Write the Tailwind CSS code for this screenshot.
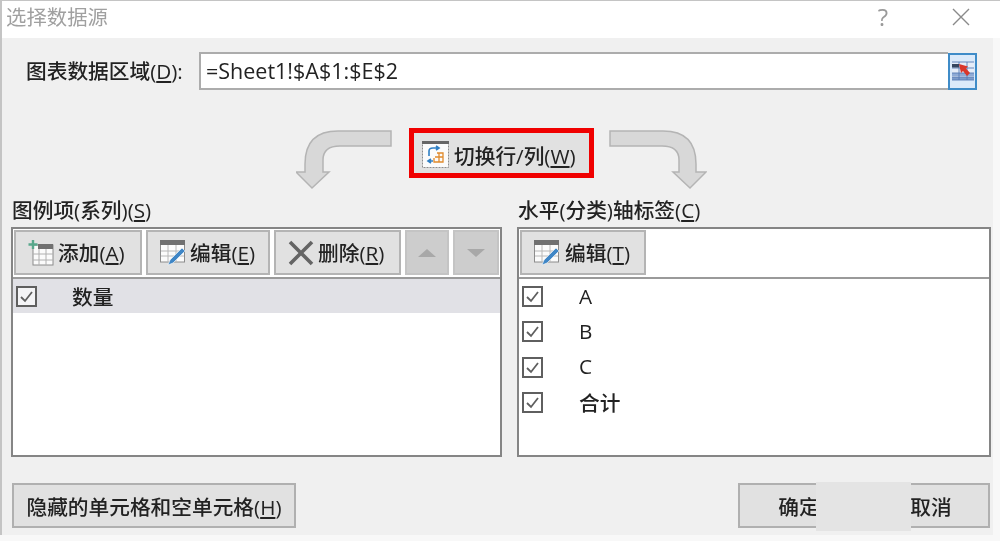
<!DOCTYPE html>
<html lang="zh-CN">
<head>
<meta charset="utf-8">
<script src="https://cdn.jsdelivr.net/npm/@tailwindcss/browser@4"></script>
<title>选择数据源</title>
</head>
<body class="overflow-hidden">
<div class="relative w-[1000px] h-[541px] overflow-hidden bg-[#f8f8f8] text-[20.700px] leading-[26px] font-medium text-[#222222] font-['Open_Sans','Noto_Sans_CJK_SC',sans-serif] blur-[0.4px]">
  <!-- title bar -->
  <div class="flex items-center h-[38px] bg-white border-t border-[#c4c4c4] border-l-2 pl-1 pr-[30px] pb-[6px]">
    <span class="text-[20.400px] font-normal text-[#a0a0a0]">选择数据源</span>
    <span class="ml-auto mr-[64px] text-[24px] font-normal text-[#9a9a9a]">?</span>
    <svg class="w-[18px] h-[18px]" viewBox="0 0 18 18"><path d="M1 1 L17 17 M17 1 L1 17" stroke="#8a8a8a" stroke-width="1.4" fill="none"/></svg>
  </div>
  <!-- dialog body -->
  <div class="w-[993px] h-[497px] bg-[#f0f0f0] border-l-2 border-[#c4c4c4] pl-[9px] pr-[1px] pt-[14px]">
    <!-- range row -->
    <div class="flex items-center h-[38px] pl-[15px] mr-[15px]">
      <span class="w-[173px] whitespace-nowrap">图表数据区域(<span class="underline">D</span>):</span>
      <div class="flex-1 h-[38px] flex items-center bg-white border-2 border-[#acacac] border-r-0 pl-[5px] text-[21.500px] font-normal">=Sheet1!$A$1:$E$2</div>
      <div class="flex items-center justify-center w-[29px] h-[37px] bg-[#dbeafa] border-2 border-[#3f8cc8]">
        <svg class="w-[22px] h-[20px] shrink-0" viewBox="0 0 22 20">
          <rect x="0" y="1" width="22" height="18" fill="#e6edf8"/>
          <rect x="0" y="12" width="22" height="3" fill="#8fabd6"/>
          <rect x="0" y="16" width="22" height="3" fill="#7d9ccb"/>
          <path d="M0 1 H22 M0 7 H22 M0 12 H22 M0 16 H22 M0 19 H22 M7 1 V19 M15 1 V19" stroke="#5a7db5" stroke-width="0.900" fill="none"/>
          <rect x="0" y="3" width="7" height="3.500" fill="#36465f"/>
          <path d="M7 3 L16 5.500 L14 7.500 L18 12 L15 15 L11 10 L9 12 Z" fill="#d9362b"/>
        </svg>
      </div>
    </div>
    <!-- switch row -->
    <div class="flex items-start h-[60px] mt-[38px] pl-[285px]">
      <svg class="w-[97px] h-[60px] mt-[2px] shrink-0" viewBox="0 0 97 60"><path d="M95 1 H42 Q9 1 9 34 V42 H0 L16 58 L33 42 H27 V30 Q27 16 44 16 H95 Z" fill="#d8d8d8" stroke="#b4b4b4" stroke-width="1.500"/></svg>
      <div class="flex items-center w-[185px] h-[50px] ml-[16px] bg-[#e1e1e1] border-[5px] border-[#f00000] pl-[8px] shrink-0">
        <svg class="w-[27px] h-[27px] mt-[2px] shrink-0" viewBox="0 0 27 27">
          <rect x="0.500" y="0.500" width="26" height="26" fill="#fbfbfb" stroke="#8c8c8c" stroke-dasharray="2 1"/>
          <rect x="0" y="0" width="27" height="3" fill="#666666"/>
          <path d="M15 12 H21 V21 H12 V17 M21 16 H13 M17 12 V21" stroke="#e08a2c" stroke-width="1.300" fill="none"/>
          <path d="M7 15 V10 Q7 7 11 7 H16 M14 5 L17 7 L14 9" stroke="#2f7fc4" stroke-width="1.600" fill="none"/>
          <path d="M11 20 H7 M9 18 L6 20 L9 22" stroke="#2f7fc4" stroke-width="1.600" fill="none"/>
        </svg>
        <span class="ml-[5px] pt-[6px] whitespace-nowrap">切换行/列(<span class="underline">W</span>)</span>
      </div>
      <svg class="w-[98px] h-[60px] mt-[2px] ml-[15px] shrink-0" viewBox="0 0 98 60"><path d="M1 1 H54 Q87 1 87 34 V42 H97 L81 58 L64 42 H70 V30 Q70 16 53 16 H1 Z" fill="#d8d8d8" stroke="#b4b4b4" stroke-width="1.500"/></svg>
    </div>
    <!-- panels -->
    <div class="flex gap-[15px] mt-[10px]">
      <!-- left -->
      <div class="w-[491px]">
        <div class="h-[26px] leading-[24px] mb-[3px] pl-px whitespace-nowrap">图例项(系列)(<span class="underline">S</span>)</div>
        <div class="h-[230px] bg-white border-2 border-[#858585]">
          <div class="flex gap-[4px] h-[50px] pl-px pt-px border-b-2 border-[#9a9a9a]">
            <div class="flex items-center w-[128px] h-[45px] bg-[#e1e1e1] border-2 border-[#b4b4b4] pl-[12px]">
              <svg class="w-[26px] h-[26px] shrink-0" viewBox="0 0 26 26">
                <rect x="5" y="5" width="20" height="20" fill="#fbfbfb" stroke="#8c8c8c"/>
                <rect x="10" y="4" width="15" height="5" fill="#707070"/>
                <path d="M5 14 H25 M5 20 H25 M11 9 V25 M18 9 V25" stroke="#b0b0b0" fill="none"/>
                <path d="M5 0 V9 M0.500 4.500 H9.500" stroke="#58a88c" stroke-width="2.400" fill="none"/>
              </svg>
              <span class="ml-[4px] whitespace-nowrap">添加(<span class="underline">A</span>)</span>
            </div>
            <div class="flex items-center w-[124px] h-[45px] bg-[#e1e1e1] border-2 border-[#b4b4b4] pl-[12px]">
              <svg class="w-[26px] h-[26px] shrink-0" viewBox="0 0 26 26">
                <rect x="0.500" y="1" width="24" height="21" fill="#fbfbfb" stroke="#8c8c8c"/>
                <rect x="0" y="0" width="25" height="5" fill="#707070"/>
                <path d="M1 11 H24 M1 16 H24 M8 5 V22 M16 5 V22" stroke="#b8b8b8" fill="none"/>
                <path d="M8 25 L10 20 L22 8 L25 11 L13 23 Z" fill="#3f86c6" stroke="#fbfbfb" stroke-width="0.600"/>
              </svg>
              <span class="ml-[4px] whitespace-nowrap">编辑(<span class="underline">E</span>)</span>
            </div>
            <div class="flex items-center w-[127px] h-[45px] bg-[#e1e1e1] border-2 border-[#b4b4b4] pl-[12px]">
              <svg class="w-[26px] h-[26px] shrink-0" viewBox="0 0 26 26"><path d="M2 2 L24 24 M24 2 L2 24" stroke="#646464" stroke-width="3.600" fill="none"/></svg>
              <span class="ml-[4px] whitespace-nowrap">删除(<span class="underline">R</span>)</span>
            </div>
            <div class="flex items-center justify-center w-[44px] h-[45px] bg-[#cdcdcd] border-2 border-[#c4c4c4]">
              <svg class="w-[18px] h-[8px]" viewBox="0 0 18 8"><path d="M9 0 L18 8 H0 Z" fill="#a8a8a8"/></svg>
            </div>
            <div class="flex items-center justify-center w-[46px] h-[45px] bg-[#cdcdcd] border-2 border-[#c4c4c4]">
              <svg class="w-[18px] h-[8px]" viewBox="0 0 18 8"><path d="M0 0 H18 L9 8 Z" fill="#a8a8a8"/></svg>
            </div>
          </div>
          <div class="flex items-center h-[34px] bg-[#e1e1e6] pl-[3px] gap-[35px]">
            <svg class="w-[21px] h-[21px] shrink-0" viewBox="0 0 21 21"><rect x="1" y="1" width="19" height="19" fill="#f4f4f6" stroke="#5f5f5f" stroke-width="2"/><path d="M5 11 L9 15 L16 6" stroke="#5f5f5f" stroke-width="1.800" fill="none"/></svg>
            <span class="pt-[1px]">数量</span>
          </div>
        </div>
      </div>
      <!-- right -->
      <div class="w-[474px]">
        <div class="h-[26px] leading-[24px] mb-[3px] pl-px whitespace-nowrap">水平(分类)轴标签(<span class="underline">C</span>)</div>
        <div class="h-[230px] bg-white border-2 border-[#858585]">
          <div class="flex h-[50px] pl-px pt-px border-b-2 border-[#9a9a9a]">
            <div class="flex items-center w-[126px] h-[45px] bg-[#e1e1e1] border-2 border-[#b4b4b4] pl-[12px]">
              <svg class="w-[26px] h-[26px] shrink-0" viewBox="0 0 26 26">
                <rect x="0.500" y="1" width="24" height="21" fill="#fbfbfb" stroke="#8c8c8c"/>
                <rect x="0" y="0" width="25" height="5" fill="#707070"/>
                <path d="M1 11 H24 M1 16 H24 M8 5 V22 M16 5 V22" stroke="#b8b8b8" fill="none"/>
                <path d="M8 25 L10 20 L22 8 L25 11 L13 23 Z" fill="#3f86c6" stroke="#fbfbfb" stroke-width="0.600"/>
              </svg>
              <span class="ml-[5px] whitespace-nowrap">编辑(<span class="underline">T</span>)</span>
            </div>
          </div>
          <div class="flex items-center h-[35.300px] pl-[3px] gap-[36px]">
            <svg class="w-[21px] h-[21px] shrink-0" viewBox="0 0 21 21"><rect x="1" y="1" width="19" height="19" fill="#fff" stroke="#5f5f5f" stroke-width="2"/><path d="M5 11 L9 15 L16 6" stroke="#5f5f5f" stroke-width="1.800" fill="none"/></svg>
            <span class="pb-[2px]">A</span>
          </div>
          <div class="flex items-center h-[35.300px] pl-[3px] gap-[36px]">
            <svg class="w-[21px] h-[21px] shrink-0" viewBox="0 0 21 21"><rect x="1" y="1" width="19" height="19" fill="#fff" stroke="#5f5f5f" stroke-width="2"/><path d="M5 11 L9 15 L16 6" stroke="#5f5f5f" stroke-width="1.800" fill="none"/></svg>
            <span class="pb-[2px]">B</span>
          </div>
          <div class="flex items-center h-[35.300px] pl-[3px] gap-[36px]">
            <svg class="w-[21px] h-[21px] shrink-0" viewBox="0 0 21 21"><rect x="1" y="1" width="19" height="19" fill="#fff" stroke="#5f5f5f" stroke-width="2"/><path d="M5 11 L9 15 L16 6" stroke="#5f5f5f" stroke-width="1.800" fill="none"/></svg>
            <span class="pb-[2px]">C</span>
          </div>
          <div class="flex items-center h-[35.300px] pl-[3px] gap-[36px]">
            <svg class="w-[21px] h-[21px] shrink-0" viewBox="0 0 21 21"><rect x="1" y="1" width="19" height="19" fill="#fff" stroke="#5f5f5f" stroke-width="2"/><path d="M5 11 L9 15 L16 6" stroke="#5f5f5f" stroke-width="1.800" fill="none"/></svg>
            <span>合计</span>
          </div>
        </div>
      </div>
    </div>
    <!-- bottom buttons -->
    <div class="relative flex mt-[26px] pl-px">
      <div class="flex items-center justify-center w-[284px] h-[45px] pt-[3px] bg-[#e1e1e1] border-2 border-[#b0b0b0]">
        <span class="whitespace-nowrap">隐藏的单元格和空单元格(<span class="underline">H</span>)</span>
      </div>
      <div class="flex items-center justify-center w-[122px] h-[45px] pt-[3px] ml-[442px] bg-[#e1e1e1] border-2 border-[#b0b0b0]">确定</div>
      <div class="flex items-center justify-center w-[118px] h-[45px] pt-[3px] ml-[12px] bg-[#e1e1e1] border-2 border-[#b0b0b0]">取消</div>
      <div class="absolute left-[805px] top-[-1px] w-[95px] h-[49px] bg-[#e4e4e4]"></div>
    </div>
  </div>
</div>
</body>
</html>
